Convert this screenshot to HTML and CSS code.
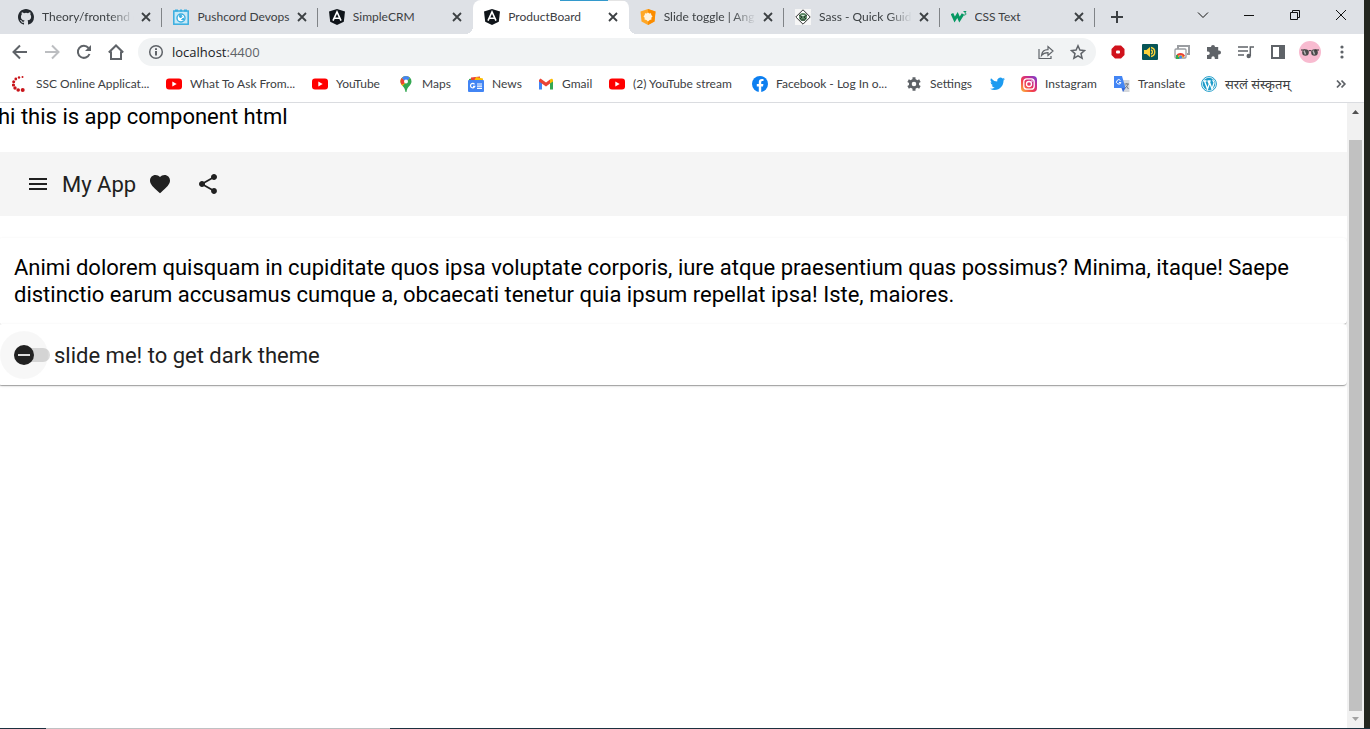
FILE: index.html
```
<!DOCTYPE html>
<html lang="en">
<head>
<meta charset="utf-8">
<title>ProductBoard</title>
<link rel="stylesheet" href="styles.css">
</head>
<body>
<svg class="defs" aria-hidden="true">
  <symbol id="close" viewBox="0 0 16 16"><path d="M4 4l8 8M12 4l-8 8" fill="none" stroke="#3c4043" stroke-width="1.8"/></symbol>
  <symbol id="angular" viewBox="0 0 16 16"><path d="M8 0l8 2.6-1.2 10.2L8 16l-6.800-3.200L0 2.600z" fill="#0f1419"/><path d="M4 11.600L8 3l4 8.600M5.600 9.200h4.800" fill="none" stroke="#fff" stroke-width="1.600"/></symbol>
  <symbol id="youtube" viewBox="0 0 16 16"><rect y="2.500" width="16" height="11" rx="3" fill="#f00"/><path d="M6.300 5.600v4.800l4.400-2.400z" fill="#fff"/></symbol>
</svg>
<div class="screen">
  <div class="window">
    <header class="tabstrip">
      <nav class="tabs" aria-label="Tabs">
        <div class="tab">
          <svg class="favicon" viewBox="0 0 16 16"><path fill="#24292f" d="M8 0C3.580 0 0 3.580 0 8c0 3.540 2.290 6.530 5.470 7.590.4.070.55-.17.55-.38v-1.490c-2.010.370-2.530-.490-2.690-.940-.090-.230-.480-.940-.820-1.130-.280-.150-.680-.520-.010-.530.630-.010 1.080.580 1.230.820.720 1.210 1.870.870 2.330.660.070-.520.280-.870.510-1.070-1.780-.200-3.640-.890-3.640-3.950 0-.870.310-1.590.820-2.150-.080-.200-.360-1.020.080-2.120 0 0 .670-.210 2.200.820a7.500 7.500 0 0 1 4 0c1.530-1.040 2.200-.820 2.200-.820.440 1.100.160 1.920.080 2.120.510.560.820 1.270.820 2.150 0 3.070-1.870 3.750-3.650 3.950.290.250.540.730.540 1.480v2.200c0 .210.150.460.550.380A8 8 0 0 0 16 8c0-4.420-3.580-8-8-8z"/></svg>
          <span class="tab-title">Theory/frontend d</span>
          <button class="tab-close" aria-label="Close tab"><svg class="favicon"><use href="#close"/></svg></button>
        </div>
        <div class="tab">
          <svg class="favicon" viewBox="0 0 16 16" fill="none" stroke="#38aee0"><rect x=".8" y="2" width="14.400" height="13.200" fill="#c9e9f7" stroke-width="1.500"/><path d="M2 1.500h3M7 1.500h2M11 1.500h3" stroke-width="2"/><circle cx="8" cy="9" r="4" fill="#fff" stroke-width="1.400"/><path d="M6 7l2-1 1 1.500-1.500 1.500zM8.500 10.500l2-1.500v2z" fill="#38aee0"/></svg>
          <span class="tab-title tab-title-whole">Pushcord Devops</span>
          <button class="tab-close" aria-label="Close tab"><svg class="favicon"><use href="#close"/></svg></button>
        </div>
        <div class="tab tab-before-active">
          <svg class="favicon"><use href="#angular"/></svg>
          <span class="tab-title tab-title-whole">SimpleCRM</span>
          <button class="tab-close" aria-label="Close tab"><svg class="favicon"><use href="#close"/></svg></button>
        </div>
        <div class="tab tab-active">
          <svg class="favicon"><use href="#angular"/></svg>
          <span class="tab-title tab-title-whole">ProductBoard</span>
          <button class="tab-close" aria-label="Close tab"><svg class="favicon"><use href="#close"/></svg></button>
        </div>
        <div class="tab">
          <svg class="favicon" viewBox="0 0 16 16"><path d="M8 0l7.500 2.600-1 10L8 16l-6.500-3.400-1-10z" fill="#ffa726"/><path d="M8 0l7.500 2.600-1 10L8 16z" fill="#fb8c00"/><path d="M8 3.500l1.300 1 1.700-.2.300 1.700 1.200 1.500-1.200 1.300.2 1.800-1.800.4L8 12.500 6.400 11l-1.900-.4.200-1.800L3.500 7.500 4.700 6 5 4.300l1.700.2z" fill="#fff3df"/></svg>
          <span class="tab-title">Slide toggle | Ang</span>
          <button class="tab-close" aria-label="Close tab"><svg class="favicon"><use href="#close"/></svg></button>
        </div>
        <div class="tab">
          <svg class="favicon" viewBox="0 0 16 16"><path d="M0 0h16v16H0z" fill="#f6f6f6"/><path d="M8 .8L15.200 8 8 15.200.8 8z" fill="#fff" stroke="#333"/><circle cx="8" cy="8" r="4" fill="#5d8a66"/><path d="M4 6l3 2-2 2M12 6L9 8l2 2M6 11h4" fill="none" stroke="#253b2a"/><path d="M6.500 6.500h3" stroke="#dceade"/></svg>
          <span class="tab-title">Sass - Quick Guid</span>
          <button class="tab-close" aria-label="Close tab"><svg class="favicon"><use href="#close"/></svg></button>
        </div>
        <div class="tab">
          <svg class="favicon" viewBox="0 0 16 16" fill="none" stroke="#059862"><path d="M1 4.500l2.700 6L6.500 6l2 4.500L12 5" stroke-width="2.800"/><path d="M12.500 2.500H15L13.700 4c2 0 1.500 2.500-.9 2" stroke-width="1"/></svg>
          <span class="tab-title tab-title-whole">CSS Text</span>
          <button class="tab-close" aria-label="Close tab"><svg class="favicon"><use href="#close"/></svg></button>
        </div>
      </nav>
      <button class="new-tab" aria-label="New tab"><svg class="favicon" viewBox="0 0 16 16"><path d="M8 2v12M2 8h12" stroke="#3c4043" stroke-width="2"/></svg></button>
      <div class="controls">
        <button class="control" aria-label="Search tabs"><svg class="glyph" viewBox="0 0 12 12"><path d="M1 3.500l5 5 5-5"/></svg></button>
        <button class="control" aria-label="Minimize"><svg class="glyph" viewBox="0 0 12 12"><path d="M1 6.500h10"/></svg></button>
        <button class="control" aria-label="Restore"><svg class="glyph" viewBox="0 0 12 12"><path d="M1.500 3.500h7v7h-7zM3.500 3.500v-2h7v7h-2"/></svg></button>
        <button class="control" aria-label="Close"><svg class="glyph" viewBox="0 0 12 12"><path d="M1 1l10 10M11 1L1 11"/></svg></button>
      </div>
    </header>

    <div class="toolbar">
      <button class="tool" aria-label="Back"><svg class="icon" viewBox="0 0 16 16"><path d="M15 8H2M8 1.500L1.500 8 8 14.500"/></svg></button>
      <button class="tool tool-off" aria-label="Forward"><svg class="icon" viewBox="0 0 16 16"><path d="M1 8h13M8 1.500L14.500 8 8 14.500"/></svg></button>
      <button class="tool" aria-label="Reload"><svg class="icon" viewBox="0 0 16 16"><path d="M13.500 10A6 6 0 1 1 12.500 4"/><path d="M15 1v6H9z" fill="#5f6368" stroke="none"/></svg></button>
      <button class="tool" aria-label="Home"><svg class="icon" viewBox="0 0 16 16"><path d="M.8 8.500L8 1.500l7.200 7M3 7.500v7.500h10V7.500"/></svg></button>
      <div class="address">
        <svg class="icon" viewBox="0 0 16 16"><circle cx="8" cy="8" r="6.300" stroke-width="1.500"/><path d="M8 7v4.500M8 4.300v1.600"/></svg>
        <div class="url"><span class="url-host">localhost</span>:4400</div>
        <button class="tool" aria-label="Share"><svg class="icon" viewBox="0 0 16 16"><path stroke-width="1.200" d="M1 5v9.500h12V12M3.500 11.500c.5-4 2.500-5.800 6.500-5.800V2.500L15 7l-5 4.500V8.600c-3 0-5 .9-6.500 2.900z"/></svg></button>
        <button class="tool" aria-label="Bookmark"><svg class="icon" viewBox="0 0 16 16"><path stroke-width="1.500" d="M8 1.800l1.900 4.300 4.600.4-3.500 3.100 1.100 4.600L8 11.800l-4.100 2.400L5 9.600 1.500 6.500l4.600-.4z"/></svg></button>
      </div>
      <div class="extensions">
        <button class="tool" aria-label="Blocker"><svg class="icon" viewBox="0 0 16 16"><path d="M5 1.500h6L14.500 5v6L11 14.500H5L1.500 11V5z" fill="#d0121c" stroke="none"/><rect x="6" y="6.500" width="4" height="3" rx="1" fill="#fff" stroke="none"/></svg></button>
        <button class="tool" aria-label="Volume"><svg class="icon" viewBox="0 0 16 16"><rect width="16" height="16" rx="1" fill="#075557" stroke="none"/><path d="M2 6h2.500L8 3v10l-3.500-3H2z" fill="#fbd33b" stroke="none"/><path d="M9 3.500c5 1 5 8 0 9M9 6c2 .5 2 3.500 0 4" stroke="#fbd33b" stroke-width="1.400"/></svg></button>
        <button class="tool" aria-label="Capture"><svg class="icon" viewBox="0 0 16 16"><path d="M4 5V2h11v8h-2" stroke="#9a9da1"/><rect x="1" y="5" width="11" height="9" rx="1" fill="#fff" stroke="#9a9da1" stroke-width="1.300"/><path d="M3 13.500a3.700 3.700 0 0 1 7 0z" fill="#fbbc04" stroke="none"/><path d="M2.800 12.500a4 4 0 0 1 7.400 0" stroke="#ea4335" stroke-width="2"/><path d="M3 11v3h2.500" stroke="#34a853"/><circle cx="6.600" cy="13" r="1.500" fill="#4285f4" stroke="none"/></svg></button>
        <button class="tool" aria-label="Extensions"><svg class="icon" viewBox="0 0 16 16"><path fill="#5f6368" stroke="none" d="M5 3a2 2 0 0 1 4 0h3.200v3.500H13a2 2 0 0 1 0 4h-.8V15H8.800v-1a1.700 1.700 0 0 0-3.400 0v1H1v-4h1a1.700 1.700 0 0 0 0-3.500H1V3z"/></svg></button>
        <button class="tool" aria-label="Media"><svg class="icon" viewBox="0 0 16 16"><path stroke-width="1.500" d="M0 3h10M0 7h10M0 11h6M12.300 12V3H16"/><circle cx="10.700" cy="12" r="2.200" fill="#5f6368" stroke="none"/></svg></button>
        <button class="tool" aria-label="Side panel"><svg class="icon" viewBox="0 0 16 16"><path d="M2 2h12v12H2z"/><path d="M9 1.500h5v13H9z" fill="#5f6368" stroke="none"/></svg></button>
        <button class="tool" aria-label="Profile"><svg class="avatar" viewBox="0 0 22 22"><circle cx="11" cy="11" r="11" fill="#f8bbd0"/><circle cx="6.500" cy="11.500" r="3.300" fill="#4a4a4a"/><circle cx="15.500" cy="11.500" r="3.300" fill="#4a4a4a"/><path d="M2 9h4M9.500 10q1.500-1 3 0M16 9h4" stroke="#333" fill="none"/><path d="M5 9.500l1.500 4M14 9.500l1.500 4" stroke="#b5b5b5" stroke-width="1.500"/></svg></button>
        <button class="tool" aria-label="Menu"><svg class="icon" viewBox="0 0 16 16"><g fill="#5f6368" stroke="none"><circle cx="8" cy="3" r="1.600"/><circle cx="8" cy="8" r="1.600"/><circle cx="8" cy="13" r="1.600"/></g></svg></button>
      </div>
    </div>

    <nav class="bookmarks" aria-label="Bookmarks">
      <a class="bookmark" href="#"><svg class="favicon" viewBox="0 0 16 16" fill="#c9151b"><circle cx="10.500" cy="1" r="1"/><circle cx="7" cy="1.500" r="1.200"/><circle cx="3.800" cy="3" r="1.400"/><circle cx="1.700" cy="5.700" r="1.500"/><circle cx="1.500" cy="9" r="1.600"/><circle cx="3" cy="12" r="1.700"/><circle cx="6.200" cy="14" r="1.800"/><circle cx="10.700" cy="14" r="2"/></svg>SSC Online Applicat...</a>
      <a class="bookmark" href="#"><svg class="favicon"><use href="#youtube"/></svg>What To Ask From...</a>
      <a class="bookmark" href="#"><svg class="favicon"><use href="#youtube"/></svg>YouTube</a>
      <a class="bookmark" href="#"><svg class="favicon" viewBox="0 0 16 16"><path d="M2.500 5.500c0 4 4.500 5 5 10.500h1c.5-5.500 5-6.500 5-10.500A5.500 5.500 0 0 0 2.500 5.500z" fill="#34a853"/><path d="M2.500 5.500C2.500 7.500 3.400 8.600 4.500 10L12 1.800A5.500 5.500 0 0 0 2.500 5.500z" fill="#fbbc04"/><path d="M2.500 5.500c0-1.500.5-2.600 1.300-3.500L8 5.500 5 8.500 3 8z" fill="#ea4335"/><path d="M3.800 2A5.500 5.500 0 0 1 12 1.800L8 6z" fill="#4285f4"/><circle cx="8" cy="5.500" r="2" fill="#fff"/></svg>Maps</a>
      <a class="bookmark" href="#"><svg class="favicon" viewBox="0 0 16 16"><path d="M1 3l9-2 1 4H1z" fill="#34a853"/><path d="M3 1.500L12 .5v4H3z" fill="#ea4335"/><path d="M8 1l7 1.500V5H6z" fill="#fbbc04"/><rect y="4" width="16" height="12" rx="1" fill="#4285f4"/><path d="M6.500 8.300a2.200 2.200 0 1 0 .3 2H5M9 8h5M9 10.200h5M9 12.400h5" stroke="#fff" fill="none" stroke-width="1.200"/></svg>News</a>
      <a class="bookmark" href="#"><svg class="favicon" viewBox="0 0 16 16"><path d="M1 4v9.500h3V7z" fill="#4285f4"/><path d="M15 4v9.500h-3V7z" fill="#34a853"/><path d="M1 4l1.500-1.500L8 6.500l4-3v4L8 10.500 1 5.500z" fill="#ea4335"/><path d="M12 7.500v-4c1.500-1.300 3-.8 3 1v1z" fill="#fbbc04"/></svg>Gmail</a>
      <a class="bookmark" href="#"><svg class="favicon"><use href="#youtube"/></svg>(2) YouTube stream</a>
      <a class="bookmark" href="#"><svg class="favicon" viewBox="0 0 16 16"><circle cx="8" cy="8" r="8" fill="#0d7ff0"/><path d="M6.800 16v-5.500h-2V8h2V6.300C6.800 4 8 3 9.800 3l1.700.1v2h-1C9.500 5.100 9.200 5.700 9.200 6.500V8h2.200l-.4 2.500H9.200V16z" fill="#fff"/></svg>Facebook - Log In o...</a>
      <a class="bookmark" href="#"><svg class="favicon" viewBox="0 0 16 16"><circle cx="8" cy="8" r="3.700" fill="none" stroke="#5f6368" stroke-width="2.800"/><path d="M8 1.200v3M8 11.800v3M2.100 4.600l2.600 1.500M11.300 9.900l2.600 1.500M2.100 11.400l2.600-1.500M11.300 6.100l2.600-1.500" stroke="#5f6368" stroke-width="3"/></svg>Settings</a>
      <a class="bookmark" href="#" aria-label="Twitter"><svg class="favicon" viewBox="0 0 16 16"><path fill="#1d9bf0" d="M5.500 14c5.800 0 9-4.800 9-9v-.4c.6-.4 1.100-1 1.500-1.600-.6.300-1.200.4-1.800.5.700-.4 1.100-1 1.400-1.700-.6.400-1.300.6-2 .8a3.200 3.200 0 0 0-5.400 2.900A9 9 0 0 1 2 2.200a3.200 3.200 0 0 0 1 4.200c-.5 0-1-.2-1.400-.4a3.200 3.200 0 0 0 2.500 3.200c-.5.100-1 .1-1.400 0a3.200 3.200 0 0 0 3 2.200A6.400 6.400 0 0 1 1 12.700 9 9 0 0 0 5.500 14z"/></svg></a>
      <a class="bookmark" href="#"><svg class="favicon" viewBox="0 0 16 16"><defs><linearGradient id="insta" x1="0" y1="1" x2="1" y2="0"><stop offset="0" stop-color="#fdc13d"/><stop offset=".4" stop-color="#f23c4e"/><stop offset=".7" stop-color="#c42d91"/><stop offset="1" stop-color="#6a45d8"/></linearGradient></defs><rect width="16" height="16" rx="4" fill="url(#insta)"/><g fill="none" stroke="#fff" stroke-width="1.300"><rect x="2.800" y="2.800" width="10.400" height="10.400" rx="3"/><circle cx="8" cy="8" r="2.500"/></g><circle cx="11" cy="5" r=".8" fill="#fff"/></svg>Instagram</a>
      <a class="bookmark" href="#"><svg class="favicon" viewBox="0 0 16 16"><path d="M6 4h9.500v12H9z" fill="#d5d8dc"/><path d="M0 0h8l3.500 12H0z" fill="#4285f4"/><path d="M7.500 12h4L9 16z" fill="#3367d6"/><path d="M6.500 4.500a2.200 2.200 0 1 0 .4 2H5" fill="none" stroke="#fff"/><path d="M10.500 8H15M12.800 7v1M14 8c-.5 2-1.500 3-3 4M11.800 9.500L14.500 13" fill="none" stroke="#727982"/></svg>Translate</a>
      <a class="bookmark bookmark-hindi" href="#" lang="sa"><svg class="favicon" viewBox="0 0 16 16"><circle cx="8" cy="8" r="7.400" fill="#fff" stroke="#1d9cc9" stroke-width="1"/><circle cx="8" cy="8" r="6.200" fill="#1d9cc9"/><path d="M2.500 5h3M3.500 5l3 8 1.800-5L7 5M6.500 5h3.200M8.300 5.500l2.700 7.500 2-6c.3-1.200-1.500-1.500-1-3.200" fill="none" stroke="#fff" stroke-width="1.300"/></svg>सरलं संस्कृतम्</a>
      <button class="more" aria-label="More bookmarks"><svg class="favicon" viewBox="0 0 16 16"><path d="M4 4.500L7.300 8 4 11.500M8.500 4.500L11.800 8l-3.300 3.500" fill="none" stroke="#5f6368" stroke-width="1.800"/></svg></button>
    </nav>

    <div class="viewport">
      <main class="page">
        <p class="intro">hi this is app component html</p>
        <div class="app-bar">
          <button class="app-button" aria-label="Menu"><svg class="app-icon" viewBox="0 0 24 24"><path d="M3 18h18v-2H3v2zm0-5h18v-2H3v2zm0-7v2h18V6H3z"/></svg></button>
          <span>My App</span>
          <button class="app-button" aria-label="Favorite"><svg class="app-icon" viewBox="0 0 24 24"><path d="M12 21.350l-1.450-1.320C5.400 15.360 2 12.280 2 8.500 2 5.420 4.420 3 7.500 3c1.740 0 3.410.81 4.500 2.090C13.090 3.810 14.760 3 16.500 3 19.580 3 22 5.420 22 8.500c0 3.780-3.400 6.860-8.550 11.540L12 21.350z"/></svg></button>
          <button class="app-button" aria-label="Share"><svg class="app-icon" viewBox="0 0 24 24"><path d="M18 16.080c-.76 0-1.440.3-1.960.77L8.910 12.700c.05-.23.09-.46.09-.7s-.04-.47-.09-.7l7.050-4.110c.54.5 1.250.81 2.040.81 1.660 0 3-1.340 3-3s-1.340-3-3-3-3 1.340-3 3c0 .24.04.47.09.7L8.040 9.810C7.500 9.310 6.790 9 6 9c-1.660 0-3 1.340-3 3s1.340 3 3 3c.79 0 1.500-.31 2.040-.81l7.120 4.160c-.05.21-.08.43-.08.65 0 1.610 1.310 2.920 2.920 2.920s2.920-1.310 2.920-2.920-1.310-2.920-2.920-2.920z"/></svg></button>
        </div>
        <section class="card">
          <p class="card-text">Animi dolorem quisquam in cupiditate quos ipsa voluptate corporis, iure atque praesentium quas possimus? Minima, itaque! Saepe distinctio earum accusamus cumque a, obcaecati tenetur quia ipsum repellat ipsa! Iste, maiores.</p>
        </section>
        <section class="card">
          <div class="switch-row">
            <input class="switch" type="checkbox" role="switch" id="dark">
            <label class="switch-label" for="dark">slide me! to get dark theme</label>
          </div>
        </section>
      </main>
      <div class="scrollbar" aria-hidden="true">
        <svg class="arrow" viewBox="0 0 17 17"><path d="M8.500 7L12 11H5z" fill="#505050"/></svg>
        <div class="thumb"></div>
        <svg class="arrow" viewBox="0 0 17 17"><path d="M5 6h7l-3.500 4z" fill="#a3a3a3"/></svg>
      </div>
    </div>
  </div>
  <div class="edge"></div>
</div>
<div class="taskline"></div>
</body>
</html>
```
FILE: styles.css
```
* { box-sizing: border-box; }

body {
  margin: 0;
  height: 100vh;
  display: flex;
  flex-direction: column;
  overflow: hidden;
  background: #fff;
  color: #3c4043;
  font: 12px/16px Lato, "Noto Sans", sans-serif;
}

button {
  display: flex;
  align-items: center;
  justify-content: center;
  padding: 0;
  border: 0;
  background: none;
  flex: none;
}

.defs { position: absolute; width: 0; height: 0; }
.screen { display: flex; flex: 1; min-height: 0; }
.window { display: flex; flex-direction: column; flex: 1; min-width: 0; }
.edge { width: 6px; background: #23261f; }
.taskline { height: 1px; background: linear-gradient(to right, #1c3240 46px, #bfc1c3 46px 390px, #1c3240 390px); }

.favicon { display: block; width: 16px; height: 16px; flex: none; }

/* Tab strip */
.tabstrip { display: flex; height: 34px; padding-left: 7px; background: #dee1e6; }
.tabs { display: flex; flex: 0 1 1088px; min-width: 0; }
.tab {
  position: relative;
  display: flex;
  align-items: center;
  gap: 8px;
  flex: 1;
  min-width: 0;
  padding: 0 8px 0 11px;
}
.tab::after { content: ""; position: absolute; right: 0; top: 8px; width: 1px; height: 19px; background: #808387; }
.tab-before-active::after { display: none; }
.tab-title {
  flex: 1;
  min-width: 0;
  margin-right: -4px;
  overflow: hidden;
  white-space: nowrap;
  -webkit-mask-image: linear-gradient(to right, #000 calc(100% - 24px), transparent);
  mask-image: linear-gradient(to right, #000 calc(100% - 24px), transparent);
}
.tab-title-whole { -webkit-mask-image: none; mask-image: none; }
.tab-active {
  border-radius: 8px 8px 0 0;
  background: linear-gradient(to right, transparent 87px, #3399cc 87px 135px, #e4e4e4 135px) top / 100% 1px no-repeat, #fff;
}
.tab-active::before,
.tab-active::after {
  content: "";
  position: absolute;
  top: auto;
  bottom: 0;
  width: 8px;
  height: 8px;
}
.tab-active::before { left: -8px; background: radial-gradient(circle at 0 0, transparent 8px, #fff 8px); }
.tab-active::after { right: -8px; background: radial-gradient(circle at 100% 0, transparent 8px, #fff 8px); }
.new-tab { width: 28px; margin-left: 8px; }
.controls { display: flex; margin-left: auto; height: 29px; }
.control { width: 46px; }
.glyph { width: 12px; height: 12px; fill: none; stroke: #111; stroke-width: 1; }

/* Address row */
.toolbar { display: flex; align-items: center; height: 36px; padding: 0 6px 0 4px; }
.tool { width: 32px; height: 28px; }
.icon { width: 16px; height: 16px; flex: none; fill: none; stroke: #5f6368; stroke-width: 2; }
.tool-off .icon { stroke: #bcbec1; }
.avatar { width: 22px; height: 22px; }
.address {
  display: flex;
  align-items: center;
  flex: 1;
  min-width: 0;
  height: 28px;
  margin: 0 6px;
  padding: 0 2px 0 10px;
  border-radius: 14px;
  background: #f1f3f4;
}
.url { flex: 1; padding-left: 8px; color: #5f6368; font-family: "Open Sans", "Noto Sans", sans-serif; font-size: 13px; }
.url-host { color: #202124; }
.extensions { display: flex; }

/* Bookmarks */
.bookmarks {
  display: grid;
  grid-template-columns: 154px 146px 86px 70px 70px 71px 143px 154px 83px 32px 93px 87px 1fr 32px;
  align-items: center;
  height: 33px;
  padding: 0 7px 4px 12px;
  border-bottom: 1px solid #dadce0;
}
.bookmark { display: flex; align-items: center; gap: 8px; color: #3c4043; text-decoration: none; white-space: nowrap; }
.bookmark-hindi { font-size: 13px; }

/* Page content */
.viewport { display: flex; flex: 1; min-height: 0; overflow: hidden; }
.page {
  flex: 1;
  min-width: 0;
  margin-left: -2px;
  color: #000;
  font: 22px/27px Roboto, sans-serif;
}
.intro { margin: 0 0 22px; }
.app-bar {
  display: flex;
  align-items: center;
  height: 64px;
  margin-bottom: 22px;
  padding: 0 16px;
  background: #f5f5f5;
  color: #212121;
}
.app-button { width: 48px; height: 48px; }
.app-icon { width: 24px; height: 24px; fill: #212121; }
.card {
  padding: 16px;
  border-radius: 4px;
  background: #fff;
  box-shadow: 0 2px 1px -1px rgba(0, 0, 0, .2), 0 1px 1px rgba(0, 0, 0, .14), 0 1px 3px rgba(0, 0, 0, .12);
}
.card-text { margin: 0; }
.switch-row { display: flex; align-items: center; gap: 4px; height: 29px; color: #212121; }
.switch-label { align-self: flex-end; }
.switch {
  appearance: none;
  position: relative;
  width: 36px;
  height: 14px;
  margin: 0;
  border-radius: 7px;
  background: #dbdbdb;
}
.switch::before {
  content: "";
  position: absolute;
  left: -14px;
  top: -17px;
  width: 48px;
  height: 48px;
  border-radius: 50%;
  background: rgba(0, 0, 0, .03);
}
.switch::after {
  content: "";
  position: absolute;
  left: 0;
  top: -3px;
  width: 20px;
  height: 20px;
  border-radius: 50%;
  background: linear-gradient(#ddd, #ddd) center / 12px 2px no-repeat, #212121;
}

.scrollbar { display: flex; flex-direction: column; width: 17px; background: #f1f1f1; }
.arrow { width: 17px; height: 17px; flex: none; }
.thumb { flex: 1; margin: 20px 2px 0; background: #c1c1c1; }
```
